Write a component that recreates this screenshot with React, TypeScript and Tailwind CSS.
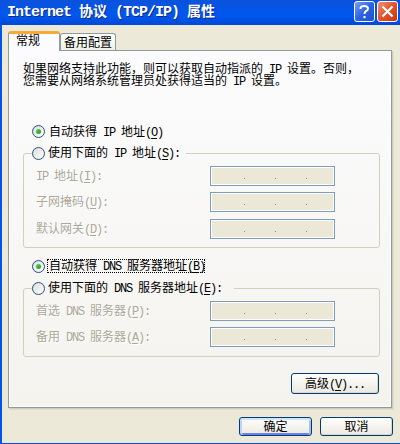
import React, { useState } from 'react';
import clsx from 'clsx';

// half-width characters sit on a 6px grid, full-width ones on a 12px grid
function Txt({ text, title }: { text: string; title?: boolean }) {
  const parts = text.split(/([\x20-\x7e]+)/).filter(Boolean);
  return (
    <>
      {parts.map((p, i) =>
        /^[\x20-\x7e]/.test(p) ? (
          <span key={i} className={clsx("leading-[0] whitespace-pre font-['Liberation_Mono',monospace]", title ? 'text-[15px] tracking-[-1px]' : 'text-[12px] tracking-[-1.2px]')}>{p}</span>
        ) : (
          <span key={i}>{p}</span>
        )
      )}
    </>
  );
}

function Label({ text, hot, tail = '' }: { text: string; hot: string; tail?: string }) {
  return (
    <span className="mb-[2px] block whitespace-pre">
      <Txt text={text + '('} />
      <span className="underline decoration-1 underline-offset-2"><Txt text={hot} /></span>
      <Txt text={')' + tail} />
    </span>
  );
}

function Radio({ checked, onClick }: { checked: boolean; onClick: () => void }) {
  return (
    <button onClick={onClick} className="flex size-[13px] shrink-0 items-center justify-center rounded-full border border-[#21517f] bg-linear-to-br from-[#dcdcd7] to-white">
      {checked && <span className="size-[5px] rounded-full bg-linear-to-br from-[#55d551] to-[#1c9a1a]" />}
    </button>
  );
}

function IpRow({ text, hot, className }: { text: string; hot: string; className?: string }) {
  return (
    <div className={clsx('flex h-5 items-center pl-3', className)}>
      <div className="w-[174px] text-[#aca899] [text-shadow:1px_1px_0_#fff]"><Label text={text} hot={hot} tail=":" /></div>
      <div className="flex h-5 w-[125px] items-center justify-between border border-[#7f9db9] bg-[#ebe8d8] pt-[5px] pr-[27px] pl-[33px] shadow-[inset_0_0_0_1px_#fff]">
        <i className="size-px bg-[#8f8c80]" />
        <i className="size-px bg-[#8f8c80]" />
        <i className="size-px bg-[#8f8c80]" />
      </div>
    </div>
  );
}

function Button({ children, className, primary }: { children: React.ReactNode; className?: string; primary?: boolean }) {
  return (
    <button
      className={clsx(
        'flex items-center justify-center rounded-[3px] border border-[#003c74] bg-linear-to-b from-white via-[#f5f4ef] to-[#ece9e0]',
        primary ? 'shadow-[inset_0_2px_0_#cee7ff,inset_2px_0_0_#bcd4f6,inset_-2px_0_0_#a4bfee,inset_0_-2px_0_#6982ee]' : 'shadow-[inset_-1px_-1px_0_#dcd8cc]',
        className
      )}
    >
      {children}
    </button>
  );
}

export default function App() {
  const [autoIp, setAutoIp] = useState(true);
  const [autoDns, setAutoDns] = useState(true);

  return (
    <div className="flex h-[444px] w-[400px] flex-col border-b border-[#0a4fd8] bg-[#ece9d8] font-['Noto_Sans_CJK_SC',sans-serif] text-[12px] leading-[12px] text-black">
      <header className="flex h-[25px] shrink-0 bg-linear-to-b from-[#0a52dc] via-[#0058ee] via-60% to-[#0048d8] pl-[7px]">
        <h1 className="mt-[3px] flex-1 text-[14px] leading-[15px] font-bold text-white [text-shadow:1px_1px_0_#0a2a88]"><Txt title text="Internet 协议 (TCP/IP) 属性" /></h1>
        <div className="mt-px mr-[2px] flex gap-[2px]">
          <button className="flex size-[21px] items-center justify-center rounded-[3px] border border-white bg-linear-to-br from-[#7ba0f5] via-[#2c62e4] to-[#1c50cf]">
            <svg width="19" height="19" viewBox="0 0 19 19" fill="none" stroke="#fff" strokeWidth="2">
              <path d="M5.5 7V6Q6 4 9.3 4Q13 4 13 6.5Q13 8 11 9.2Q9.5 10.2 9.5 12" />
              <path d="M9.5 14v2.2" />
            </svg>
          </button>
          <button className="flex size-[21px] items-center justify-center rounded-[3px] border border-white bg-linear-to-br from-[#f0906f] via-[#e2512a] to-[#c8390f]">
            <svg width="19" height="19" viewBox="0 0 19 19" stroke="#fff" strokeWidth="2.2">
              <path d="M4.5 4.5l10 10M14.5 4.5l-10 10" />
            </svg>
          </button>
        </div>
      </header>

      <div className="flex flex-1 flex-col border-l-2 border-[#0055e8] pl-[6px]">
        <nav className="z-10 -mb-px flex h-[26px] items-end">
          <div className="h-5 w-[52px] rounded-t-[3px] border-x border-t-[3px] border-x-[#919b9c] border-t-[#f5a93a] bg-[#fcfcfe] pl-[7px]">常规</div>
          <div className="mb-px flex h-[17px] w-[56px] items-center justify-center rounded-t-[3px] border border-b-0 border-[#919b9c] bg-linear-to-b from-white to-[#f0f0ea]">备用配置</div>
        </nav>

        <main className="flex h-[358px] w-[384px] flex-col border border-[#919b9c] bg-linear-to-b from-[#fcfcfe] to-[#f4f3ee] pr-[11px] pl-[14px] shadow-[inset_-1px_-1px_0_#fff,inset_1px_0_0_#fff,1px_1px_0_#d0cebf,2px_2px_0_#e0dcc9]">
          <p className="mt-[11px] h-[25px] whitespace-nowrap">
            <Txt text="如果网络支持此功能，则可以获取自动指派的 IP 设置。否则，" /><br />
            <Txt text="您需要从网络系统管理员处获得适当的 IP 设置。" />
          </p>

          <div className="mt-[38px] flex h-[13px] items-center gap-1 pl-[9px]">
            <Radio checked={autoIp} onClick={() => setAutoIp(true)} />
            <Label text="自动获得 IP 地址" hot="O" />
          </div>
          <fieldset className="mt-2 h-[102px] w-[357px] rounded-[3px] border border-[#d0d0bf]">
            <legend className="ml-2 flex h-[14px] items-center gap-[3px] pr-[6px]">
              <Radio checked={!autoIp} onClick={() => setAutoIp(false)} />
              <Label text="使用下面的 IP 地址" hot="S" tail=":" />
            </legend>
            <IpRow text="IP 地址" hot="I" className="mt-[6px]" />
            <IpRow text="子网掩码" hot="U" className="mt-[6px]" />
            <IpRow text="默认网关" hot="D" className="mt-[7px]" />
          </fieldset>

          <div className="mt-[11px] flex h-[14px] items-center gap-[2px] pl-[9px]">
            <Radio checked={autoDns} onClick={() => setAutoDns(true)} />
            <span className="flex h-[14px] w-[158px] items-center border border-dotted border-black pl-px"><Label text="自动获得 DNS 服务器地址" hot="B" /></span>
          </div>
          <fieldset className="mt-2 h-[76px] w-[357px] rounded-[3px] border border-[#d0d0bf]">
            <legend className="ml-2 flex h-[14px] items-center gap-[3px] pr-[12px]">
              <Radio checked={!autoDns} onClick={() => setAutoDns(false)} />
              <Label text="使用下面的 DNS 服务器地址" hot="E" tail=":" />
            </legend>
            <IpRow text="首选 DNS 服务器" hot="P" className="mt-[6px]" />
            <IpRow text="备用 DNS 服务器" hot="A" className="mt-[6px]" />
          </fieldset>

          <Button className="mt-4 mr-px h-[21px] w-[88px] self-end"><Label text="高级" hot="V" tail="..." /></Button>
        </main>

        <footer className="mt-[9px] flex gap-2 pl-[231px]">
          <Button primary className="h-[19px] w-[73px] pb-[2px]">确定</Button>
          <Button className="h-[19px] w-[73px] pb-[2px]">取消</Button>
        </footer>
      </div>
    </div>
  );
}
